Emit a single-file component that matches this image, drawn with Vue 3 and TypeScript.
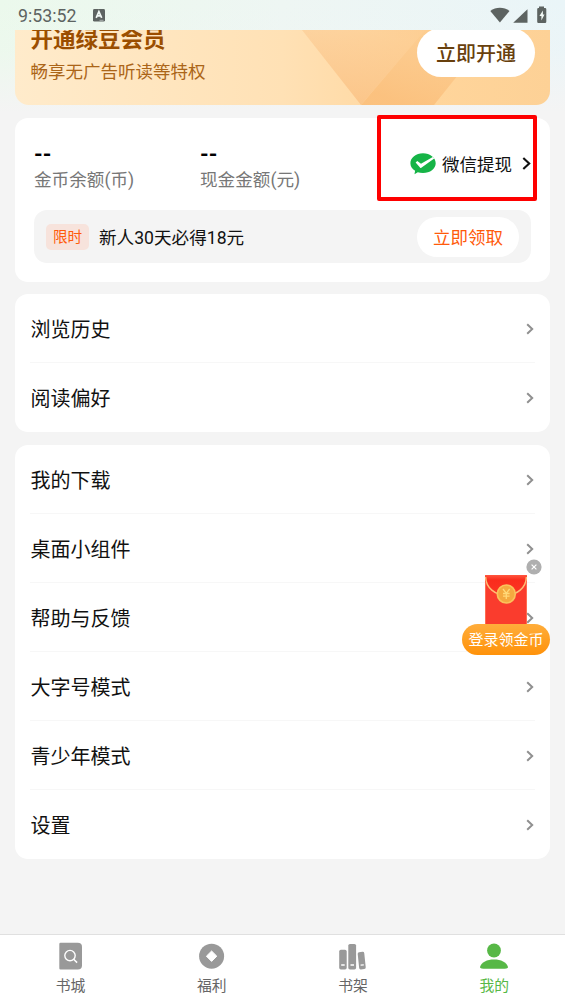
<script setup lang="ts">
interface Balance {
  value: string
  label: string
}

interface Tab {
  id: 'store' | 'welfare' | 'shelf' | 'mine'
  label: string
}

const balances: Balance[] = [
  { value: '--', label: '金币余额(币)' },
  { value: '--', label: '现金金额(元)' },
]

const menuGroups: string[][] = [
  ['浏览历史', '阅读偏好'],
  ['我的下载', '桌面小组件', '帮助与反馈', '大字号模式', '青少年模式', '设置'],
]

const tabs: Tab[] = [
  { id: 'store', label: '书城' },
  { id: 'welfare', label: '福利' },
  { id: 'shelf', label: '书架' },
  { id: 'mine', label: '我的' },
]
const activeTab: Tab['id'] = 'mine'
</script>

<template>
  <div class="screen">
    <header class="status">
      <span class="clock">9:53:52</span>
      <svg class="keyboard" width="12" height="13" viewBox="0 0 12 13">
        <rect width="12" height="12.6" rx="1.4" fill="#5d6361" />
        <path d="M3.2 8.8 5.9 2.6 8.7 8.800M4.200 6.800h3.500" fill="none" stroke="#f1f8f5" stroke-width="1.700" />
        <path d="M6.500 11.300h4" stroke="#aab0ae" stroke-width="1" />
      </svg>
      <svg class="signals" width="57" height="18" viewBox="0 0 57 18">
        <path d="M0.3 5C5.8.6 14 .6 19.5 5L9.9 16.6Z" fill="#5d6361" />
        <path d="M37.5 3.2v13.6H23.2Z" fill="#5d6361" />
        <path d="M49 .4h5V2h1.1q1.2 0 1.2 1.2v12.6q0 1.2-1.2 1.2H48.400q-1.200 0-1.200-1.200V3.200Q47.200 2 48.400 2H49Z" fill="#5d6361" />
        <path d="M52.900 4.500 49.400 10h2v4.500L54.500 8.600h-1.600Z" fill="#f1f8f5" />
      </svg>
    </header>

    <main class="content">
      <section class="banner">
        <svg class="facets" width="535" height="75" viewBox="0 0 535 75">
          <defs>
            <linearGradient id="facet-left" gradientUnits="userSpaceOnUse" x1="350" y1="0" x2="330" y2="75">
              <stop offset="0" stop-color="#f9be80" stop-opacity="0.300" />
              <stop offset="1" stop-color="#f9b978" stop-opacity="0.650" />
            </linearGradient>
            <linearGradient id="facet-right" gradientUnits="userSpaceOnUse" x1="420" y1="0" x2="390" y2="75">
              <stop offset="0" stop-color="#f9c07f" stop-opacity="0.350" />
              <stop offset="1" stop-color="#fbbf7b" stop-opacity="0.900" />
            </linearGradient>
          </defs>
          <path d="M287 0H410L346 75Z" fill="url(#facet-left)" />
          <path d="M410 0H479L419 75H346Z" fill="url(#facet-right)" />
        </svg>
        <div class="banner-copy">
          <h1>开通绿豆会员</h1>
          <p>畅享无广告听读等特权</p>
        </div>
        <button class="join">立即开通</button>
      </section>

      <section class="card wallet">
        <div class="balances">
          <div v-for="item in balances" :key="item.label" class="balance">
            <strong>{{ item.value }}</strong>
            <span>{{ item.label }}</span>
          </div>
          <div class="withdraw">
            <svg width="26" height="22" viewBox="0 0 26 22">
              <path d="M13 .2C20.100.2 25.700 4.700 25.700 10.200S20.100 20 13 20q-3-.1-5.200-.8L4.500 21.200l.6-3.400C2.100 16 .4 13.300.4 10.200.4 4.700 5.900.2 13 .2Z" fill="#16b447" />
              <path d="M5.600 9.400 7.300 8 11 10.700 22.800 3.900 24.200 5.400 11.300 14.800Q10.700 15.200 10.200 14.700Z" fill="#fff" />
            </svg>
            <span>微信提现</span>
            <svg class="withdraw-arrow" width="9" height="13" viewBox="0 0 9 13">
              <path d="M1.300 1 7.200 6.500 1.300 12" fill="none" stroke="#111" stroke-width="2.100" />
            </svg>
          </div>
        </div>
        <div class="offer">
          <span class="tag">限时</span>
          <span class="offer-text">新人30天必得18元</span>
          <button class="claim">立即领取</button>
        </div>
        <div class="highlight"></div>
      </section>

      <nav v-for="(group, index) in menuGroups" :key="index" class="card menu">
        <div v-for="item in group" :key="item" class="row">
          <span>{{ item }}</span>
          <svg width="8" height="12" viewBox="0 0 8 12">
            <path d="M1.200 1.200 6.200 6 1.200 10.800" fill="none" stroke="#909090" stroke-width="2" />
          </svg>
        </div>
      </nav>
    </main>

    <aside class="packet">
      <svg class="envelope" width="44" height="50" viewBox="0 0 44 50">
        <defs>
          <linearGradient id="flap" x1="0" y1="0" x2="0" y2="1">
            <stop offset="0" stop-color="#ff563f" />
            <stop offset="0.250" stop-color="#fa2c1c" />
            <stop offset="1" stop-color="#fb3524" />
          </linearGradient>
        </defs>
        <rect x="1" width="42" height="50" rx="1" fill="#fa3c2d" />
        <path d="M1 1Q1 0 2 0H42Q43 0 43 1C43 13 33 20 22 20S1 13 1 1Z" fill="url(#flap)" />
        <path d="M1.600 2C2 13 11 20 22 20S42 13 42.400 2" fill="none" stroke="#ffbd75" stroke-width="1.500" />
        <path d="M1.500 6V50M42.500 6V50" stroke="#ff6b50" stroke-width="1" />
        <circle cx="22.300" cy="19" r="9.800" fill="#fbc25c" />
        <circle cx="22.300" cy="19" r="8.200" fill="#f4aa40" />
        <path d="M19 14 22.300 18.300 25.600 14M22.300 18.300V24M19 18.500H25.600M19 21.200H25.600" fill="none" stroke="#ffd978" stroke-width="1.300" />
      </svg>
      <svg class="close" width="16" height="16" viewBox="0 0 16 16">
        <circle cx="8" cy="8" r="7.600" fill="#afafaf" />
        <path d="M5.600 5.600 10.400 10.400M10.400 5.600 5.600 10.400" stroke="#fff" stroke-width="1.200" />
      </svg>
      <span class="packet-label">登录领金币</span>
    </aside>

    <footer class="tabs">
      <div v-for="tab in tabs" :key="tab.id" class="tab" :class="{ active: tab.id === activeTab }">
        <svg v-if="tab.id === 'store'" width="28" height="28" viewBox="0 0 28 28">
          <path d="M2.300 2Q2.300.8 3.500.8H20.700Q25 .8 25 5V23.500Q25 27.500 20.700 27.500H3.500Q2.300 27.500 2.300 26.300Z" fill="#999" />
          <circle cx="13" cy="13.600" r="5.200" fill="none" stroke="#fff" stroke-width="1.400" />
          <path d="M16.700 17.300 20.100 20.600" stroke="#fff" stroke-width="1.500" />
        </svg>
        <svg v-else-if="tab.id === 'welfare'" width="28" height="28" viewBox="0 0 28 28">
          <circle cx="13.600" cy="14.200" r="12.500" fill="#999" />
          <path d="M13.600 9 18.800 14.200 13.600 19.400 8.400 14.200Z" fill="#fff" stroke="#fff" stroke-linejoin="round" />
        </svg>
        <svg v-else-if="tab.id === 'shelf'" width="28" height="28" viewBox="0 0 28 28">
          <rect x=".2" y="7.800" width="7.500" height="19.600" rx="1.700" fill="#999" />
          <rect x="9.300" y="1.900" width="7.800" height="25.500" rx="1.700" fill="#999" />
          <rect x="19.400" y="10" width="6.600" height="17.300" rx="1.600" fill="#999" transform="rotate(-6 22.600 18.500)" />
          <path d="M2.200 23H5.700M11.500 23H15M21.600 23.200 24.800 22.900" stroke="#fff" stroke-width="1.300" />
        </svg>
        <svg v-else width="28" height="28" viewBox="0 0 28 28">
          <circle cx="14" cy="8.500" r="6.900" fill="#57b846" />
          <path d="M0 25C1.500 20 7 17.400 14 17.400S26.500 20 28 25Q28.200 26.800 22 26.800H6Q-.2 26.800 0 25Z" fill="#57b846" />
        </svg>
        <span>{{ tab.label }}</span>
      </div>
    </footer>
  </div>
</template>

<style>
body {
  margin: 0;
  background: #f4f4f4;
}
</style>

<style scoped>
.screen {
  position: relative;
  display: flex;
  flex-direction: column;
  width: 565px;
  height: 1004px;
  overflow: hidden;
  box-sizing: border-box;
  background:
    linear-gradient(180deg, rgba(244, 244, 244, 0) 0, rgba(244, 244, 244, 0.15) 50px, #f4f4f4 112px),
    linear-gradient(90deg, #ebf9ec 0, #eef6f3 50%, #eaf5f8 100%);
  color: #111;
  font-family: Roboto, "Noto Sans CJK SC", sans-serif;
}
svg {
  display: block;
  flex: none;
}
button {
  border: 0;
  padding: 0;
  font-family: inherit;
  background: #fff;
}
.status {
  display: flex;
  align-items: center;
  flex: none;
  height: 30px;
  padding: 0 18px;
  box-sizing: border-box;
  color: #5d6361;
}
.clock {
  width: 75px;
  font-size: 17.8px;
  line-height: 30px;
  padding-top: 2px;
}
.signals {
  margin-left: auto;
}
.content {
  flex: 1;
  padding: 0 15px;
}
.banner {
  position: relative;
  display: flex;
  justify-content: space-between;
  height: 75px;
  overflow: hidden;
  border-radius: 0 0 14px 14px;
  background: linear-gradient(90deg, #ffebcb 0, #ffe1b5 50%, #ffd59b 78%, #fdd196 100%);
}
.facets {
  position: absolute;
  inset: 0;
}
.banner-copy {
  position: relative;
  padding-left: 15.5px;
  margin-top: -8px;
}
h1 {
  margin: 0;
  font-size: 22.5px;
  line-height: 34px;
  font-weight: 700;
  color: #9b4e00;
}
p {
  margin: 3px 0 0;
  font-size: 17.5px;
  line-height: 26px;
  color: #ab6518;
}
.join {
  position: relative;
  width: 118px;
  height: 49px;
  margin: -2px 15px 0 0;
  padding-bottom: 1px;
  border-radius: 25px;
  font-size: 20px;
  font-weight: 500;
  color: #68400d;
}
.card {
  border-radius: 13px;
  background: #fff;
}
.wallet {
  position: relative;
  height: 164px;
  margin-top: 13px;
  padding: 0 19px;
  box-sizing: border-box;
}
.balances {
  display: flex;
  height: 92px;
}
.balance {
  display: flex;
  flex-direction: column;
  width: 166px;
  padding-top: 23px;
}
.balance strong {
  font-size: 22px;
  line-height: 27px;
  color: #000;
}
.balance span {
  font-size: 17.6px;
  line-height: 25px;
  color: #777;
}
.withdraw {
  display: flex;
  align-items: center;
  height: 91px;
  margin-left: auto;
  font-size: 17.5px;
  gap: 6px;
}
.withdraw span {
  margin-top: -1px;
}
.withdraw-arrow {
  margin-left: 4px;
}
.offer {
  display: flex;
  align-items: center;
  height: 53px;
  padding: 0 12px;
  border-radius: 13px;
  background: #f4f4f4;
}
.tag {
  width: 43px;
  height: 26px;
  border-radius: 5px;
  background: #f7e3dc;
  color: #ff5a0a;
  font-size: 14.6px;
  line-height: 26px;
  text-align: center;
}
.offer-text {
  margin: -1px 0 0 10px;
  font-size: 17.6px;
}
.claim {
  width: 102px;
  height: 40px;
  margin-left: auto;
  padding-bottom: 1px;
  border-radius: 20px;
  font-size: 17.5px;
  color: #ff5a0a;
}
.highlight {
  position: absolute;
  top: -3px;
  left: 362px;
  width: 160px;
  height: 86px;
  box-sizing: border-box;
  border: 4px solid #fe0000;
  border-radius: 2px;
}
.menu {
  margin-top: 12px;
  padding: 0 15px;
}
.menu + .menu {
  margin-top: 13px;
}
.row {
  display: flex;
  align-items: center;
  justify-content: space-between;
  height: 69px;
  box-sizing: border-box;
  border-bottom: 1px solid #f7f7f7;
  font-size: 20px;
}
.row:last-child {
  border-bottom-color: transparent;
}
.row span {
  margin-left: 0.5px;
}
.row svg {
  margin: 1px 1px 0 0;
}
.packet {
  position: absolute;
  top: 559px;
  left: 462px;
  width: 88px;
  height: 96px;
}
.envelope {
  position: absolute;
  left: 22px;
  top: 16px;
}
.close {
  position: absolute;
  left: 63.5px;
  top: 0;
}
.packet-label {
  position: absolute;
  left: 0;
  bottom: 0;
  width: 88px;
  height: 31px;
  border-radius: 16px;
  background: linear-gradient(180deg, #ffad3b, #ff920a);
  color: #fff;
  font-size: 15px;
  line-height: 32px;
  text-align: center;
}
.tabs {
  display: flex;
  flex: none;
  height: 70px;
  box-sizing: border-box;
  border-top: 1px solid #e0e0e0;
  background: #fff;
}
.tab {
  display: flex;
  flex: 1;
  flex-direction: column;
  align-items: center;
  padding-top: 7px;
  font-size: 14.8px;
  line-height: 22px;
  color: #666;
}
.tab span {
  margin-top: 5px;
}
.tab.active {
  color: #57b846;
}
</style>
